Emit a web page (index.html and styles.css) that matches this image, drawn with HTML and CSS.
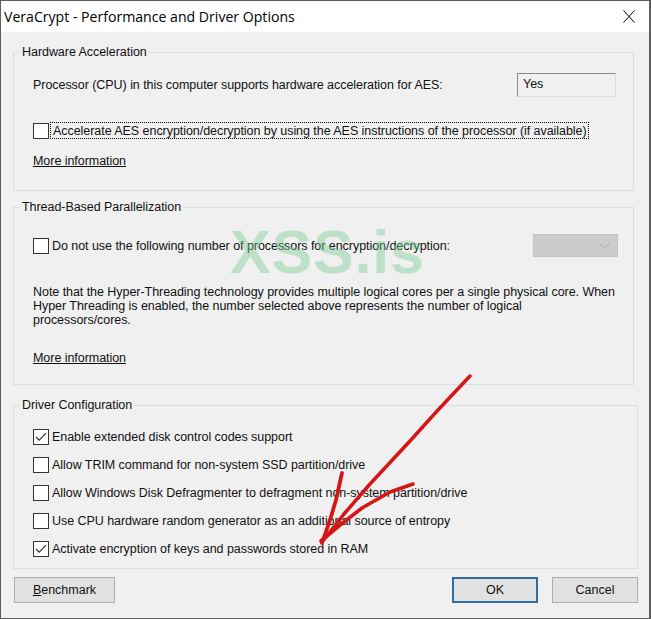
FILE: index.html
```html
<!DOCTYPE html>
<html lang="en">
<head>
<meta charset="utf-8">
<title>VeraCrypt - Performance and Driver Options</title>
<link rel="stylesheet" href="styles.css">
</head>
<body>
<div class="window">
  <div class="titlebar">
    <span class="title">VeraCrypt - Performance and Driver Options</span>
    <svg class="close" width="12" height="13" viewBox="0 0 12 13"><path d="M0.5 0.5 L11.5 12.5 M11.5 0.5 L0.5 12.5" stroke="#000" stroke-width="1" fill="none"/></svg>
  </div>
  <div class="content">
    <section class="group g-hw">
      <div class="group-title">Hardware Acceleration</div>
      <div class="row row-cpu">
        <span>Processor (CPU) in this computer supports hardware acceleration for AES:</span>
        <div class="field">Yes</div>
      </div>
      <div class="check-row row-focus">
        <span class="cb"></span>
        <span class="label focus">Accelerate AES encryption/decryption by using the AES instructions of the processor (if available)</span>
      </div>
      <div class="link link-hw">More information</div>
    </section>

    <section class="group g-thread">
      <div class="group-title">Thread-Based Parallelization</div>
      <div class="row row-threads">
        <div class="check-row">
          <span class="cb"></span>
          <span class="label">Do not use the following number of processors for encryption/decryption:</span>
        </div>
        <div class="combo">
          <svg width="11" height="6" viewBox="0 0 11 6"><path d="M0.5 0.5 L5.5 5 L10.5 0.5" stroke="#a8a8a8" stroke-width="1" fill="none"/></svg>
        </div>
      </div>
      <p class="note">Note that the Hyper-Threading technology provides multiple logical cores per a single physical core. When<br>Hyper Threading is enabled, the number selected above represents the number of logical<br>processors/cores.</p>
      <div class="link link-thread">More information</div>
    </section>

    <section class="group g-driver">
      <div class="group-title">Driver Configuration</div>
      <div class="driver-list">
        <div class="check-row drow"><span class="cb checked"><svg width="14" height="14" viewBox="0 0 14 14"><path d="M2 7 L5.2 10.2 L12 3.2" stroke="#333" stroke-width="1.2" fill="none"/></svg></span><span class="label">Enable extended disk control codes support</span></div>
        <div class="check-row drow"><span class="cb"></span><span class="label">Allow TRIM command for non-system SSD partition/drive</span></div>
        <div class="check-row drow"><span class="cb"></span><span class="label">Allow Windows Disk Defragmenter to defragment non-system partition/drive</span></div>
        <div class="check-row drow"><span class="cb"></span><span class="label">Use CPU hardware random generator as an additional source of entropy</span></div>
        <div class="check-row drow"><span class="cb checked"><svg width="14" height="14" viewBox="0 0 14 14"><path d="M2 7 L5.2 10.2 L12 3.2" stroke="#333" stroke-width="1.2" fill="none"/></svg></span><span class="label">Activate encryption of keys and passwords stored in RAM</span></div>
      </div>
    </section>

    <div class="buttons">
      <button class="btn btn-bench"><u>B</u>enchmark</button>
      <div class="btn-group">
        <button class="btn btn-ok">OK</button>
        <button class="btn btn-cancel">Cancel</button>
      </div>
    </div>
  </div>

  <div class="watermark">XSS.is</div>
  <svg class="arrows" width="651" height="619" viewBox="0 0 651 619">
    <g stroke="#d41616" fill="none" stroke-linecap="round" stroke-linejoin="round">
      <path d="M470 376 L438 410 L410 441 L370 484 L344 514 L322 542" stroke-width="3.5"/>
      <path d="M342 473 L336 500 L330 520 L322 543" stroke-width="3.8"/>
      <path d="M413 484 L390 492 L362 508 L340 525 L321 541" stroke-width="3.6"/>
    </g>
  </svg>
</div>
</body>
</html>
```

FILE: styles.css
```css
* { box-sizing: border-box; }
html, body { margin: 0; padding: 0; }
body {
  width: 651px;
  height: 619px;
  background: #f0f0f0;
  font-family: "Liberation Sans", Arial, sans-serif;
  font-size: 12.5px;
  letter-spacing: -0.05px;
  color: #111;
  overflow: hidden;
}
.window {
  position: relative;
  width: 651px;
  height: 619px;
  border: 1px solid #5e5e5e;
  border-right-width: 2px;
  display: flex;
  flex-direction: column;
  background: #f0f0f0;
}
.titlebar {
  height: 31px;
  flex: none;
  background: #fff;
  display: flex;
  align-items: center;
  justify-content: space-between;
  padding: 0 14px 0 3px;
}
.title {
  font-family: "Open Sans", "Noto Sans", sans-serif;
  font-size: 14.1px;
  letter-spacing: 0;
  color: #000;
}
.close { display: block; }
.content {
  flex: 1;
  display: flex;
  flex-direction: column;
  padding: 0 11px 0 12px;
}
.group {
  border: 1px solid #dcdcdc;
  display: flex;
  flex-direction: column;
  padding: 0 0 0 19px;
}
.group-title {
  align-self: flex-start;
  margin: -8px 0 0 -13px;
  padding: 0 2px;
  background: #f0f0f0;
  line-height: 14px;
}
.g-hw { margin-top: 20px; width: 621px; height: 139px; }
.g-thread { margin-top: 16px; width: 621px; height: 178px; }
.g-driver { margin-top: 20px; width: 625px; height: 164px; }

.row {
  display: flex;
  align-items: center;
  justify-content: space-between;
}
.row-cpu { margin-top: 14px; height: 24px; }
.field {
  width: 99px;
  height: 24px;
  margin-right: 17px;
  border: 1px solid #dcdcdc;
  border-top-color: #8c8c8c;
  border-left-color: #8c8c8c;
  padding: 3px 0 0 5px;
  line-height: 14px;
}
.check-row {
  display: flex;
  align-items: center;
}
.cb {
  width: 16px;
  height: 16px;
  flex: none;
  border: 1px solid #333;
  background: #fff;
  display: flex;
  align-items: center;
  justify-content: center;
}
.cb svg { display: block; }
.label { margin-left: 3px; line-height: 14px; white-space: nowrap; }
.row-focus { margin-top: 25px; height: 17px; }
.focus {
  margin-left: 1px;
  padding: 1px 1px 0 2px;
  border: 1px dotted #000;
  line-height: 14px;
}
.link {
  align-self: flex-start;
  line-height: 14px;
  text-decoration: underline;
}
.link-hw { margin-top: 15px; }
.row-threads { margin-top: 20px; height: 23px; }
.combo {
  width: 85px;
  height: 23px;
  margin-right: 15px;
  background: #cccccc;
  border: 1px solid #c2c2c2;
  display: flex;
  align-items: center;
  justify-content: flex-end;
  padding-right: 7px;
}
.note {
  margin: 28px 0 0 0;
  line-height: 14px;
  white-space: nowrap;
}
.link-thread { margin-top: 24px; }
.driver-list {
  margin-top: 11px;
  display: flex;
  flex-direction: column;
}
.drow { height: 28px; }
.buttons {
  margin-top: 8px;
  display: flex;
  justify-content: space-between;
  align-items: flex-start;
}
.btn-group { display: flex; gap: 14px; }
.btn {
  height: 26px;
  background: #e1e1e1;
  border: 1px solid #adadad;
  font-family: "Liberation Sans", Arial, sans-serif;
  font-size: 12.5px;
  color: #111;
  padding: 0;
  margin: 0;
}
.btn-bench { width: 101px; margin-left: 1px; }
.btn-ok {
  width: 86px;
  border-color: #2f6fa8;
  box-shadow: inset 0 0 0 1px #2f6fa8;
}
.btn-cancel { width: 86px; }
.watermark {
  position: absolute;
  left: 229px;
  top: 221px;
  font-family: "Liberation Sans", Arial, sans-serif;
  font-weight: bold;
  font-size: 61px;
  letter-spacing: 0.8px;
  line-height: 60px;
  color: rgba(120, 205, 145, 0.42);
  pointer-events: none;
}
.arrows {
  position: absolute;
  left: -1px;
  top: -1px;
  pointer-events: none;
}
```
